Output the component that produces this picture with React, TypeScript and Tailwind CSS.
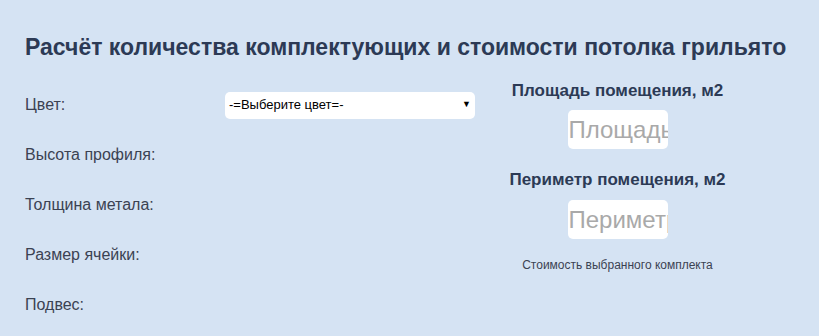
import React from "react";

export default function App() {
  const labels = ["Высота профиля:", "Толщина метала:", "Размер ячейки:", "Подвес:"];
  return (
    <div className="w-[819px] h-[336px] overflow-hidden bg-[#d5e3f3] font-['Liberation_Sans',Arial,sans-serif]">
      <div className="pt-[34px] pl-[25px]">
        <h1 className="text-[23px] leading-[27px] font-bold text-[#2c3a55] whitespace-nowrap">
          Расчёт количества комплектующих и стоимости потолка грильято
        </h1>
        <div className="flex mt-[20px]">
          <div className="w-[450px] flex flex-col">
            <div className="h-[50px] flex items-center mt-[-1px]">
              <span className="w-[200px] text-[16px] text-[#3b4252]">Цвет:</span>
              <div className="w-[250px] h-[27px] bg-white rounded-[5px] flex items-center justify-between pl-[4px] pr-[4px]">
                <span className="text-[13px] text-black">-=Выберите цвет=-</span>
                <span className="text-[9px] text-black">▼</span>
              </div>
            </div>
            {labels.map((l) => (
              <div key={l} className="h-[50px] flex items-center">
                <span className="text-[16px] text-[#3b4252]">{l}</span>
              </div>
            ))}
          </div>
          <div className="w-[285px] flex flex-col items-center">
            <div className="text-[17px] font-bold text-[#2c3a55] leading-[20px] mt-0 whitespace-nowrap">Площадь помещения, м2</div>
            <div className="mt-[9px] w-[100px] h-[39px] bg-white rounded-[5px] overflow-hidden flex items-center pl-[1px]">
              <span className="text-[24px] text-[#a9a9a9] whitespace-nowrap">Площадь</span>
            </div>
            <div className="mt-[21px] text-[17px] font-bold text-[#2c3a55] leading-[20px] whitespace-nowrap">Периметр помещения, м2</div>
            <div className="mt-[10px] w-[100px] h-[39px] bg-white rounded-[5px] overflow-hidden flex items-center pl-[1px]">
              <span className="text-[24px] text-[#a9a9a9] whitespace-nowrap">Периметр</span>
            </div>
            <div className="mt-[19px] text-[12px] text-[#3b4252] leading-[14px] whitespace-nowrap">Стоимость выбранного комплекта</div>
          </div>
        </div>
      </div>
    </div>
  );
}
